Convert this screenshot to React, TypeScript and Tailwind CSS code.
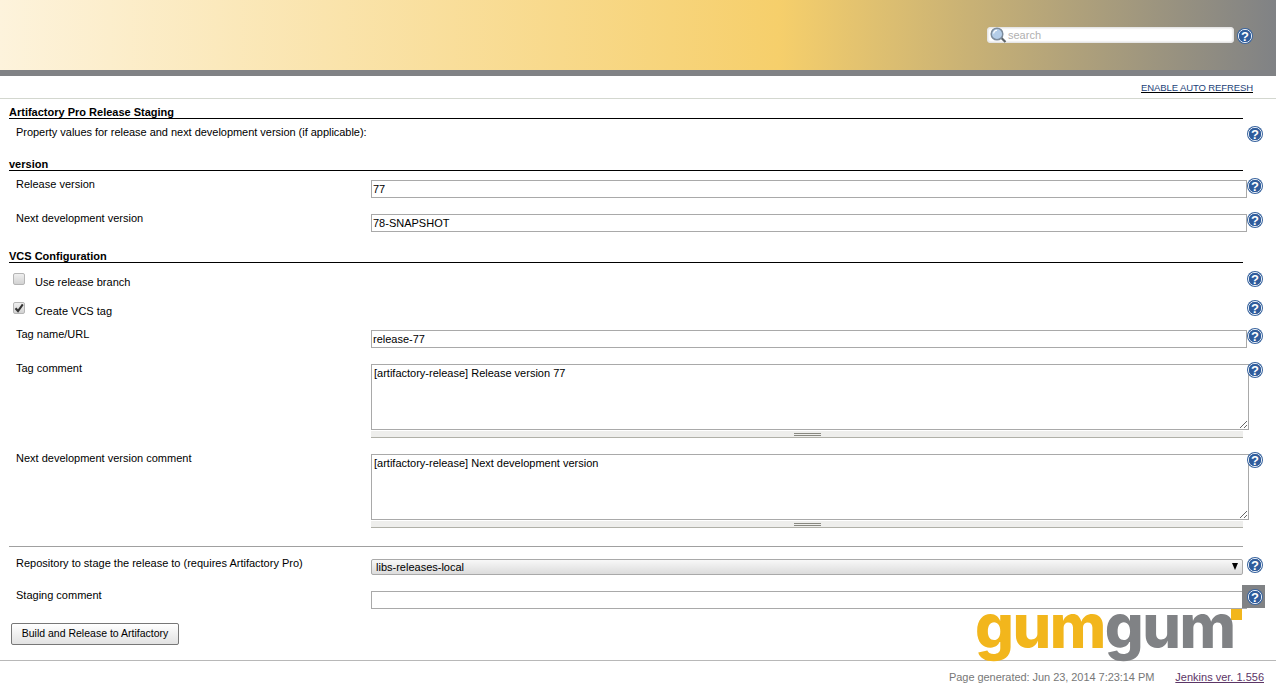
const labelFont = "font-['Liberation_Sans',Arial,sans-serif]";

function HelpIcon() {
  return (
    <svg width="16" height="16" viewBox="0 0 16 16" className="relative z-10 shrink-0">
      <circle cx="8" cy="8" r="8" fill="#3a659f" />
      <circle cx="8" cy="8" r="6.6" fill="none" stroke="#e4ebf4" strokeWidth="1" />
      <circle cx="8" cy="8" r="6" fill="#2f5c9c" />
      <text x="8" y="12.6" textAnchor="middle" fontSize="13" fontWeight="700" fill="#fff" fontFamily="Liberation Sans, Arial, sans-serif">
        ?
      </text>
    </svg>
  );
}

function SectionHeading({ title, height }: { title: string; height: string }) {
  return (
    <div className={`ml-[9px] mr-[33px] flex items-end border-b border-black ${height}`}>
      <span className="text-[11px] font-bold leading-[12px] text-black">{title}</span>
    </div>
  );
}

function Row({
  label,
  height,
  children,
}: {
  label: string;
  height: string;
  children?: React.ReactNode;
}) {
  return (
    <div className={`flex items-start ${height}`}>
      <label className="w-[371px] shrink-0 pl-4 text-[11px] leading-[12px] text-black">{label}</label>
      <div className="w-[876px] shrink-0">{children}</div>
      <HelpIcon />
    </div>
  );
}

function TextInput({ value }: { value: string }) {
  return (
    <input
      readOnly
      value={value}
      className="mt-[2px] block h-[18px] w-[876px] border border-[#a9a9a9] bg-white px-[1px] text-[11px] text-black outline-none"
    />
  );
}

function CommentBox({ value }: { value: string }) {
  return (
    <>
      <textarea
        readOnly
        value={value}
        className="mt-[2px] block h-[66px] w-[878px] border border-[#a9a9a9] bg-white px-[2px] py-[2px] text-[11px] leading-[13px] text-black outline-none"
      />
      <div className="mt-[1px] flex h-[7px] w-[872px] items-center justify-center border-b border-[#b0b0a8] bg-[#eeeeec]">
        <div className="h-[3px] w-[27px] border-y border-[#888880]" />
      </div>
    </>
  );
}

function CheckRow({ label, checked, height }: { label: string; checked?: boolean; height: string }) {
  return (
    <div className={`flex items-start ${height}`}>
      <div className="flex w-[1247px] shrink-0 items-start pl-[13px]">
        <span className="mt-[2px] flex h-[12px] w-[12px] items-center justify-center rounded-[2px] border border-[#b5b5b5] bg-gradient-to-b from-[#efefef] to-[#d2d2d2]">
          {checked && (
            <svg width="10" height="10" viewBox="0 0 10 10">
              <path d="M1.5 5.2 L4 8 L8.8 1.4" fill="none" stroke="#333" strokeWidth="2.1" />
            </svg>
          )}
        </span>
        <span className="ml-[10px] pt-[5px] text-[11px] leading-[12px] text-black">{label}</span>
      </div>
      <HelpIcon />
    </div>
  );
}

export default function App() {
  return (
    <div className={`relative h-[692px] w-[1276px] overflow-hidden bg-white ${labelFont}`}>
      <header className="flex h-[70px] items-start justify-end bg-[linear-gradient(to_right,#fdf3dc_0%,#f6cf6b_61%,#808285_100%)] pr-[23px] pt-[27px]">
        <div className="flex h-[16px] w-[247px] items-center rounded-[3px] border border-[#e6e6e6] bg-white pl-[2px] shadow-[inset_0_0_2px_#ccc]">
          <svg width="17" height="16" viewBox="0 0 17 16" className="shrink-0">
            <path d="M11 10.5 L15.5 15" stroke="#5f6468" strokeWidth="2.2" />
            <circle cx="7" cy="7" r="5.8" fill="#b4cde8" stroke="#7d8c9c" strokeWidth="1.5" />
            <path d="M3.6 6.5 a3.6 3.6 0 0 1 3.4-3.3" fill="none" stroke="#fff" strokeWidth="1.1" />
          </svg>
          <input
            readOnly
            placeholder="search"
            className="ml-[1px] w-[200px] bg-transparent text-[11px] leading-[12px] outline-none placeholder:text-[#b0b0b0]"
          />
        </div>
        <div className="ml-[3px] mt-[1px]">
          <HelpIcon />
        </div>
      </header>
      <div className="h-[6px] bg-[#808285]" />
      <div className="flex h-[23px] items-start justify-end border-b border-[#d3d7cf] pr-[23px] pt-[6px]">
        <a href="#" className="text-[9.5px] leading-[11px] tracking-[-0.1px] text-[#1c3f78] underline decoration-black">
          ENABLE AUTO REFRESH
        </a>
      </div>

      <SectionHeading title="Artifactory Pro Release Staging" height="h-[20px]" />
      <div className="flex h-[33px] items-start pt-[7px]">
        <label className="w-[1247px] shrink-0 pl-4 text-[11px] leading-[12px] tracking-[-0.03px] text-black">
          Property values for release and next development version (if applicable):
        </label>
        <HelpIcon />
      </div>

      <SectionHeading title="version" height="h-[19px]" />
      <div className="h-[7px]" />
      <Row label="Release version" height="h-[34px]">
        <TextInput value="77" />
      </Row>
      <Row label="Next development version" height="h-[34px]">
        <TextInput value="78-SNAPSHOT" />
      </Row>

      <SectionHeading title="VCS Configuration" height="h-[17px]" />
      <div className="h-[8px]" />
      <CheckRow label="Use release branch" height="h-[29px]" />
      <CheckRow label="Create VCS tag" checked height="h-[28px]" />
      <Row label="Tag name/URL" height="h-[34px]">
        <TextInput value="release-77" />
      </Row>
      <Row label="Tag comment" height="h-[90px]">
        <CommentBox value="[artifactory-release] Release version 77" />
      </Row>
      <Row label="Next development version comment" height="h-[94px]">
        <CommentBox value="[artifactory-release] Next development version" />
      </Row>

      <hr className="ml-[9px] mr-[33px] border-t border-[#a0a0a0]" />
      <div className="h-[10px]" />
      <Row label="Repository to stage the release to (requires Artifactory Pro)" height="h-[32px]">
        <div className="relative mt-[2px] w-[872px]">
          <select className="block h-[16px] w-full appearance-none rounded-[2px] border border-[#a9a9a9] bg-gradient-to-b from-[#f8f8f8] to-[#dcdcdc] pl-[4px] text-[11px] leading-[14px] text-black outline-none">
            <option>libs-releases-local</option>
          </select>
          <span className="absolute right-[5px] top-[4px] h-0 w-0 border-x-[3.5px] border-t-[7px] border-x-transparent border-t-black" />
        </div>
      </Row>
      <Row label="Staging comment" height="h-[34px]">
        <TextInput value="" />
      </Row>

      <div className="pl-[11px]">
        <button className="block h-[22px] w-[168px] rounded-[2px] border border-[#777] bg-gradient-to-b from-white to-[#e2e2e2] text-[10.5px] text-black">
          Build and Release to Artifactory
        </button>
      </div>

      <footer className="mt-[15px] flex h-[32px] items-center justify-end border-t border-[#b8b8b8] pr-[12px] pt-[2px] text-[11px]">
        <span className="tracking-[-0.05px] text-[#777777]">Page generated: Jun 23, 2014 7:23:14 PM</span>
        <a href="#" className="ml-[21px] text-[#5c3566] underline">
          Jenkins ver. 1.556
        </a>
      </footer>

      {/* logo sits over the form, with its grey tab behind the last help icon */}
      <div className="absolute left-[1242px] top-[585px] h-[23px] w-[23px] bg-[#808285]" />
      <div className="absolute left-[1231px] top-[609px] h-[11px] w-[11px] bg-[#f2b61c]" />
      <div className="absolute left-[975px] top-[591px] whitespace-nowrap font-['Inter',sans-serif] text-[61px] font-extrabold leading-[70px] tracking-[-1.5px]">
        <span className="text-[#f2b61c]">gum</span>
        <span className="text-[#808285]">gum</span>
      </div>
    </div>
  );
}
